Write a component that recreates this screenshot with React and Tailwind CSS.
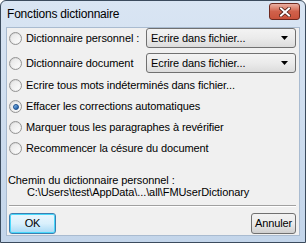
import React from 'react';

const Radio = ({ checked }) => (
  <span className="relative flex h-[13px] w-[13px] shrink-0 items-center justify-center rounded-full border border-[#939393] bg-gradient-to-br from-[#d2d2d2] to-[#fbfbfb]">
    <span className="h-[9px] w-[9px] rounded-full bg-gradient-to-br from-[#e6e6e6] to-[#fdfdfd]" />
    {checked && (
      <span className="absolute h-[6px] w-[6px] rounded-full border border-[#1c4e8a] bg-gradient-to-br from-[#8cc4f4] to-[#0f4f9c]" />
    )}
  </span>
);

const Option = ({ label, checked, children, className = 'h-[21px]' }) => (
  <div className={`flex items-center ${className}`}>
    <div className="flex flex-1 items-center gap-[4px] pl-[1px]">
      <Radio checked={checked} />
      <span>{label}</span>
    </div>
    {children}
  </div>
);

const Combo = () => (
  <div className="flex h-[20px] w-[150px] items-center justify-between rounded-[3px] border border-[#707070] bg-gradient-to-b from-[#f3f3f3] via-[#ebebeb] to-[#dcdcdc] pl-[4px] pr-[7px]">
    <span>Ecrire dans fichier...</span>
    <svg width="7" height="4" viewBox="0 0 7 4">
      <path d="M0 0h7L3.5 4z" fill="#000" />
    </svg>
  </div>
);

export default function App() {
  const options = [
    'Ecrire tous mots indéterminés dans fichier...',
    'Effacer les corrections automatiques',
    'Marquer tous les paragraphes à revérifier',
    'Recommencer la césure du document',
  ];

  return (
    <div className="h-[243px] w-[306px] bg-white" style={{ fontFamily: '"Liberation Sans", Arial, sans-serif' }}>
      <div className="flex h-[243px] w-[306px] flex-col rounded-t-[6px] border border-[#3b4b5d] bg-gradient-to-b from-[#d9e5f3] to-[#c3d5ea] px-[5px] pb-[6px]">
        {/* title bar */}
        <div className="flex h-[26px] items-center justify-between pl-[1px]">
          <span className="text-[12px] tracking-[-0.2px] text-black">Fonctions dictionnaire</span>
          <div className="mb-[5px] flex h-[17px] w-[31px] items-center justify-center rounded-[3px] border border-[#6e2a20] bg-gradient-to-b from-[#eab0a3] via-[#d0614b] to-[#c9523b]">
            <svg width="12" height="10" viewBox="0 0 12 10">
              <path d="M2 1.5l8 7M10 1.5l-8 7" stroke="#4a1a12" strokeWidth="3.6" strokeLinecap="square" />
              <path d="M2 1.5l8 7M10 1.5l-8 7" stroke="#fff" strokeWidth="2" strokeLinecap="square" />
            </svg>
          </div>
        </div>

        {/* client area */}
        <div className="flex flex-1 flex-col border border-[#a9bbd0] bg-[#f0f0f0] pl-[1px] pr-[3px] text-[11px] tracking-[-0.1px] text-black">
          <Option label="Dictionnaire personnel :" className="h-[20px]">
            <Combo />
          </Option>
          <Option label="Dictionnaire document" className="mt-[5px] h-[20px]">
            <Combo />
          </Option>
          <div className="mt-[2px]">
            {options.map((o, i) => (
              <Option key={o} label={o} checked={i === 1} />
            ))}
          </div>

          <div className="mt-[15px] leading-[12px]">
            <div>Chemin du dictionnaire personnel :</div>
            <div className="pl-[19px]">C:\Users\test\AppData\...\all\FMUserDictionary</div>
          </div>

          <div className="ml-[1px] mt-[7px] border-b border-t border-b-white border-t-[#a0a0a0]" />

          <div className="mt-[6px] flex items-center justify-between pl-[1px]">
            <button className="flex h-[21px] w-[47px] items-center justify-center rounded-[3px] border border-[#3c7fb1] bg-gradient-to-b from-[#eaf6fd] via-[#d9f0fc] to-[#a7d9f5] shadow-[inset_0_0_0_1px_#48d8fb]">
              OK
            </button>
            <button className="flex h-[21px] w-[45px] items-center justify-center rounded-[3px] border border-[#707070] bg-gradient-to-b from-[#f2f2f2] via-[#ebebeb] to-[#cfcfcf]">
              Annuler
            </button>
          </div>
        </div>
      </div>
    </div>
  );
}
